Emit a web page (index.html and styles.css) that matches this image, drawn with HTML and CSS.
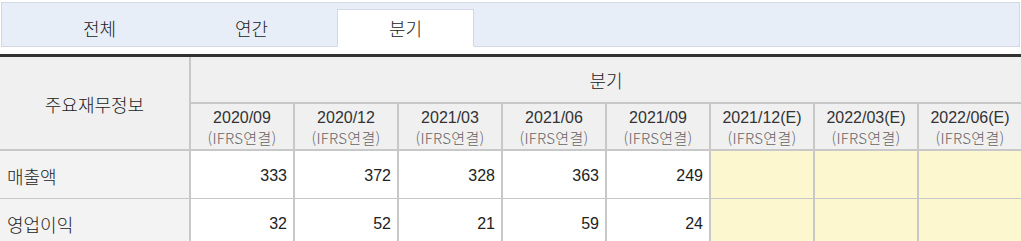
FILE: index.html
```html
<!DOCTYPE html>
<html lang="ko">
<head>
<meta charset="utf-8">
<title>주요재무정보</title>
<link rel="stylesheet" href="styles.css">
</head>
<body>
<div class="tabbar">
  <div class="tab t1">전체</div>
  <div class="tab t2">연간</div>
  <div class="tab t3 active">분기</div>
</div>
<table class="fin">
  <colgroup>
    <col class="c-label">
    <col class="c-val"><col class="c-val"><col class="c-val"><col class="c-val">
    <col class="c-val"><col class="c-val"><col class="c-val"><col class="c-val">
  </colgroup>
  <thead>
    <tr class="h1">
      <th class="title" rowspan="2">주요재무정보</th>
      <th class="period" colspan="8">분기</th>
    </tr>
    <tr class="h2">
      <th><span class="d">2020/09</span><span class="s">(IFRS연결)</span></th>
      <th><span class="d">2020/12</span><span class="s">(IFRS연결)</span></th>
      <th><span class="d">2021/03</span><span class="s">(IFRS연결)</span></th>
      <th><span class="d">2021/06</span><span class="s">(IFRS연결)</span></th>
      <th><span class="d">2021/09</span><span class="s">(IFRS연결)</span></th>
      <th><span class="d">2021/12(E)</span><span class="s">(IFRS연결)</span></th>
      <th><span class="d">2022/03(E)</span><span class="s">(IFRS연결)</span></th>
      <th><span class="d">2022/06(E)</span><span class="s">(IFRS연결)</span></th>
    </tr>
  </thead>
  <tbody>
    <tr class="r1">
      <th class="lbl">매출액</th>
      <td>333</td><td>372</td><td>328</td><td>363</td><td>249</td>
      <td class="est"></td><td class="est"></td><td class="est"></td>
    </tr>
    <tr class="r2">
      <th class="lbl">영업이익</th>
      <td>32</td><td>52</td><td>21</td><td>59</td><td>24</td>
      <td class="est"></td><td class="est"></td><td class="est"></td>
    </tr>
  </tbody>
</table>
</body>
</html>
```

FILE: styles.css
```css
html, body {
  margin: 0;
  padding: 0;
  background: #ffffff;
  font-family: "Noto Sans CJK KR", "Noto Sans", sans-serif;
  font-weight: 300;
  color: #222;
  overflow: hidden;
}

.tabbar {
  display: flex;
  align-items: flex-end;
  margin: 2px 1px 0 1px;
  height: 43px;
  background: #e8eef8;
  border: 1px solid #d3d8e4;
}

.tab {
  width: 137px;
  height: 36px;
  display: flex;
  align-items: center;
  justify-content: center;
  font-size: 18px;
  color: #222;
  box-sizing: border-box;
  margin-bottom: -1px;
  padding-bottom: 2px;
}

.t1 { margin-left: 29px; }
.t2 { margin-left: 15px; }
.t3 { margin-left: 17px; }

.tab.active {
  background: #ffffff;
  border: 1px solid #d3d8e4;
  border-bottom: 1px solid #ffffff;
  height: 38px;
  padding-bottom: 0;
}

.fin {
  margin-top: 7px;
  border-collapse: separate;
  border-spacing: 0;
  table-layout: fixed;
  width: 1021px;
  border-top: 3px solid #333333;
}

.c-label { width: 189px; }
.c-val { width: 104px; }

.fin th, .fin td {
  padding: 0;
  font-weight: 300;
}

.fin thead th {
  background: #f0f0f0;
  color: #222;
}

.h1 th { height: 45px; }

.title {
  font-size: 18px;
  border-bottom: 2px solid #c8c8c8;
  padding-top: 1px !important;
}

.period {
  font-size: 18px;
  border-left: 2px solid #c8c8c8;
  border-bottom: 2px solid #c8c8c8;
}

.h2 th {
  border-left: 2px solid #c8c8c8;
  border-bottom: 2px solid #c8c8c8;
  vertical-align: top;
  padding-top: 4px;
  height: 41px;
}

.h2 .d {
  display: block;
  font-family: "Liberation Sans", Arial, sans-serif;
  font-weight: normal;
  font-size: 16px;
  line-height: 19px;
  color: #333;
}

.h2 .s {
  display: block;
  font-size: 15px;
  line-height: 22px;
  color: #666;
  letter-spacing: 0.3px;
}

.fin tbody th.lbl {
  background: #f3f3f3;
  text-align: left;
  padding-left: 7px;
  font-size: 18px;
  color: #222;
  box-sizing: border-box;
}

.fin tbody td {
  border-left: 2px solid #c8c8c8;
  background: #ffffff;
  text-align: right;
  padding-right: 6px;
  font-family: "Liberation Sans", Arial, sans-serif;
  font-weight: normal;
  font-size: 16px;
  color: #222;
}

.fin tbody td.est {
  background: #fdf7cf;
}

.r1 th, .r1 td {
  height: 45px;
  border-bottom: 1px solid #c8c8c8;
  padding-top: 2px;
}

.r2 th, .r2 td {
  height: 45px;
  padding-top: 2px;
}
```
